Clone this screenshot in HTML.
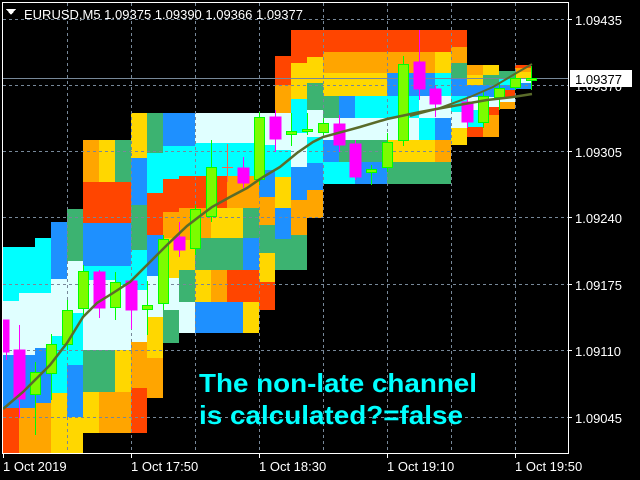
<!DOCTYPE html>
<html><head><meta charset="utf-8"><style>
html,body{margin:0;padding:0;background:#000;width:640px;height:480px;overflow:hidden}
svg{position:absolute;left:0;top:0}
text{font-family:"Liberation Sans",sans-serif}
</style></head><body>
<svg width="640" height="480" viewBox="0 0 640 480" shape-rendering="crispEdges">
<rect width="640" height="480" fill="#000"/>
<g id="blocks">
<rect x="3" y="247" width="16" height="54" fill="#00ffff"/><rect x="3" y="301" width="16" height="54" fill="#e0ffff"/><rect x="3" y="355" width="16" height="53" fill="#1e90ff"/><rect x="3" y="408" width="16" height="45" fill="#ff4500"/>
<rect x="19" y="247" width="16" height="46" fill="#00ffff"/><rect x="19" y="293" width="16" height="62" fill="#e0ffff"/><rect x="19" y="355" width="16" height="53" fill="#1e90ff"/><rect x="19" y="408" width="16" height="45" fill="#ffa500"/>
<rect x="35" y="238" width="16" height="55" fill="#00ffff"/><rect x="35" y="293" width="16" height="55" fill="#e0ffff"/><rect x="35" y="348" width="16" height="55" fill="#1e90ff"/><rect x="35" y="403" width="16" height="50" fill="#ffa500"/>
<rect x="51" y="222" width="16" height="57" fill="#1e90ff"/><rect x="51" y="279" width="16" height="57" fill="#e0ffff"/><rect x="51" y="336" width="16" height="57" fill="#00ffff"/><rect x="51" y="393" width="16" height="60" fill="#ffd700"/>
<rect x="67" y="209" width="16" height="52" fill="#3cb371"/><rect x="67" y="261" width="16" height="52" fill="#e0ffff"/><rect x="67" y="313" width="16" height="52" fill="#00ffff"/><rect x="67" y="365" width="16" height="52" fill="#1e90ff"/><rect x="67" y="417" width="16" height="36" fill="#ffd700"/>
<rect x="83" y="140" width="16" height="42" fill="#ffa500"/><rect x="83" y="182" width="16" height="41" fill="#ff4500"/><rect x="83" y="223" width="16" height="43" fill="#1e90ff"/><rect x="83" y="266" width="16" height="14" fill="#00ffff"/><rect x="83" y="280" width="16" height="70" fill="#e0ffff"/><rect x="83" y="350" width="16" height="42" fill="#3cb371"/><rect x="83" y="392" width="16" height="41" fill="#ffd700"/>
<rect x="99" y="140" width="16" height="42" fill="#ffd700"/><rect x="99" y="182" width="16" height="41" fill="#ff4500"/><rect x="99" y="223" width="16" height="43" fill="#1e90ff"/><rect x="99" y="266" width="16" height="14" fill="#00ffff"/><rect x="99" y="280" width="16" height="70" fill="#e0ffff"/><rect x="99" y="350" width="16" height="42" fill="#3cb371"/><rect x="99" y="392" width="16" height="41" fill="#ffa500"/>
<rect x="115" y="140" width="16" height="42" fill="#3cb371"/><rect x="115" y="182" width="16" height="41" fill="#ff4500"/><rect x="115" y="223" width="16" height="43" fill="#1e90ff"/><rect x="115" y="266" width="16" height="19" fill="#00ffff"/><rect x="115" y="285" width="16" height="65" fill="#e0ffff"/><rect x="115" y="350" width="16" height="42" fill="#ffd700"/><rect x="115" y="392" width="16" height="41" fill="#ffa500"/>
<rect x="131" y="113" width="16" height="45" fill="#ffd700"/><rect x="131" y="158" width="16" height="47" fill="#1e90ff"/><rect x="131" y="205" width="16" height="45" fill="#3cb371"/><rect x="131" y="250" width="16" height="40" fill="#00ffff"/><rect x="131" y="290" width="16" height="52" fill="#e0ffff"/><rect x="131" y="342" width="16" height="46" fill="#ffa500"/><rect x="131" y="388" width="16" height="45" fill="#ff4500"/>
<rect x="147" y="113" width="16" height="40" fill="#3cb371"/><rect x="147" y="153" width="16" height="40" fill="#00ffff"/><rect x="147" y="193" width="16" height="42" fill="#ff4500"/><rect x="147" y="235" width="16" height="41" fill="#1e90ff"/><rect x="147" y="276" width="16" height="41" fill="#e0ffff"/><rect x="147" y="317" width="16" height="41" fill="#ffd700"/><rect x="147" y="358" width="16" height="40" fill="#ffa500"/>
<rect x="163" y="113" width="16" height="33" fill="#1e90ff"/><rect x="163" y="146" width="16" height="33" fill="#00ffff"/><rect x="163" y="179" width="16" height="33" fill="#ff4500"/><rect x="163" y="212" width="16" height="26" fill="#ffa500"/><rect x="163" y="238" width="16" height="40" fill="#ffd700"/><rect x="163" y="278" width="16" height="32" fill="#e0ffff"/><rect x="163" y="310" width="16" height="33" fill="#3cb371"/>
<rect x="179" y="113" width="16" height="33" fill="#1e90ff"/><rect x="179" y="146" width="16" height="30" fill="#00ffff"/><rect x="179" y="176" width="16" height="32" fill="#ff4500"/><rect x="179" y="208" width="16" height="32" fill="#ffa500"/><rect x="179" y="240" width="16" height="30" fill="#ffd700"/><rect x="179" y="270" width="16" height="32" fill="#3cb371"/><rect x="179" y="302" width="16" height="31" fill="#e0ffff"/>
<rect x="195" y="113" width="16" height="30" fill="#e0ffff"/><rect x="195" y="143" width="16" height="33" fill="#00ffff"/><rect x="195" y="176" width="16" height="32" fill="#ff4500"/><rect x="195" y="208" width="16" height="30" fill="#ffa500"/><rect x="195" y="238" width="16" height="32" fill="#3cb371"/><rect x="195" y="270" width="16" height="32" fill="#ffd700"/><rect x="195" y="302" width="16" height="31" fill="#1e90ff"/>
<rect x="211" y="113" width="16" height="30" fill="#e0ffff"/><rect x="211" y="143" width="16" height="33" fill="#00ffff"/><rect x="211" y="176" width="16" height="32" fill="#ff4500"/><rect x="211" y="208" width="16" height="30" fill="#ffd700"/><rect x="211" y="238" width="16" height="32" fill="#3cb371"/><rect x="211" y="270" width="16" height="32" fill="#ffa500"/><rect x="211" y="302" width="16" height="31" fill="#1e90ff"/>
<rect x="227" y="113" width="16" height="30" fill="#e0ffff"/><rect x="227" y="143" width="16" height="33" fill="#00ffff"/><rect x="227" y="176" width="16" height="32" fill="#ffa500"/><rect x="227" y="208" width="16" height="30" fill="#ffd700"/><rect x="227" y="238" width="16" height="32" fill="#3cb371"/><rect x="227" y="270" width="16" height="32" fill="#ff4500"/><rect x="227" y="302" width="16" height="31" fill="#1e90ff"/>
<rect x="243" y="113" width="16" height="30" fill="#e0ffff"/><rect x="243" y="143" width="16" height="33" fill="#00ffff"/><rect x="243" y="176" width="16" height="32" fill="#ffa500"/><rect x="243" y="208" width="16" height="30" fill="#3cb371"/><rect x="243" y="238" width="16" height="32" fill="#1e90ff"/><rect x="243" y="270" width="16" height="32" fill="#ff4500"/><rect x="243" y="302" width="16" height="31" fill="#ffd700"/>
<rect x="259" y="113" width="16" height="32" fill="#e0ffff"/><rect x="259" y="145" width="16" height="25" fill="#00ffff"/><rect x="259" y="170" width="16" height="27" fill="#1e90ff"/><rect x="259" y="197" width="16" height="28" fill="#ffa500"/><rect x="259" y="225" width="16" height="28" fill="#3cb371"/><rect x="259" y="253" width="16" height="29" fill="#ffd700"/><rect x="259" y="282" width="16" height="28" fill="#ff4500"/>
<rect x="275" y="56" width="16" height="29" fill="#ff4500"/><rect x="275" y="85" width="16" height="28" fill="#ffa500"/><rect x="275" y="113" width="16" height="37" fill="#e0ffff"/><rect x="275" y="150" width="16" height="27" fill="#00ffff"/><rect x="275" y="177" width="16" height="31" fill="#ffd700"/><rect x="275" y="208" width="16" height="31" fill="#1e90ff"/><rect x="275" y="239" width="16" height="31" fill="#3cb371"/>
<rect x="291" y="30" width="16" height="33" fill="#ff4500"/><rect x="291" y="63" width="16" height="36" fill="#ffd700"/><rect x="291" y="99" width="16" height="34" fill="#00ffff"/><rect x="291" y="133" width="16" height="34" fill="#e0ffff"/><rect x="291" y="167" width="16" height="33" fill="#1e90ff"/><rect x="291" y="200" width="16" height="35" fill="#ffa500"/><rect x="291" y="235" width="16" height="35" fill="#3cb371"/>
<rect x="307" y="30" width="16" height="27" fill="#ff4500"/><rect x="307" y="57" width="16" height="26" fill="#ffd700"/><rect x="307" y="83" width="16" height="27" fill="#3cb371"/><rect x="307" y="110" width="16" height="27" fill="#e0ffff"/><rect x="307" y="137" width="16" height="26" fill="#00ffff"/><rect x="307" y="163" width="16" height="27" fill="#1e90ff"/><rect x="307" y="190" width="16" height="28" fill="#ffa500"/>
<rect x="323" y="30" width="128" height="22" fill="#ff4500"/>
<rect x="323" y="52" width="112" height="21" fill="#ffa500"/><rect x="435" y="52" width="16" height="21" fill="#ffd700"/>
<rect x="323" y="73" width="64" height="23" fill="#ffd700"/><rect x="387" y="73" width="48" height="23" fill="#1e90ff"/><rect x="435" y="73" width="16" height="23" fill="#00ffff"/>
<rect x="323" y="96" width="16" height="22" fill="#3cb371"/><rect x="339" y="96" width="16" height="22" fill="#1e90ff"/><rect x="355" y="96" width="64" height="22" fill="#00ffff"/><rect x="419" y="96" width="32" height="22" fill="#e0ffff"/>
<rect x="323" y="118" width="96" height="22" fill="#e0ffff"/><rect x="419" y="118" width="16" height="22" fill="#00ffff"/><rect x="435" y="118" width="16" height="22" fill="#1e90ff"/>
<rect x="323" y="140" width="16" height="22" fill="#1e90ff"/><rect x="339" y="140" width="48" height="22" fill="#3cb371"/><rect x="387" y="140" width="48" height="22" fill="#ffd700"/><rect x="435" y="140" width="16" height="22" fill="#ffa500"/>
<rect x="323" y="162" width="32" height="22" fill="#00ffff"/><rect x="355" y="162" width="32" height="22" fill="#1e90ff"/><rect x="387" y="162" width="64" height="22" fill="#3cb371"/>
<rect x="451" y="30" width="16" height="17" fill="#ff4500"/><rect x="451" y="47" width="16" height="16" fill="#ffa500"/><rect x="451" y="63" width="16" height="15" fill="#3cb371"/><rect x="451" y="78" width="16" height="18" fill="#1e90ff"/><rect x="451" y="96" width="16" height="16" fill="#00ffff"/><rect x="451" y="112" width="16" height="16" fill="#e0ffff"/><rect x="451" y="128" width="16" height="17" fill="#ffd700"/>
<rect x="467" y="65" width="16" height="10" fill="#ffa500"/><rect x="467" y="75" width="16" height="10" fill="#ffd700"/><rect x="467" y="85" width="16" height="12" fill="#1e90ff"/><rect x="467" y="97" width="16" height="13" fill="#e0ffff"/><rect x="467" y="110" width="16" height="17" fill="#00ffff"/><rect x="467" y="127" width="16" height="10" fill="#ff4500"/>
<rect x="483" y="65" width="16" height="10" fill="#ffd700"/><rect x="483" y="75" width="16" height="10" fill="#3cb371"/><rect x="483" y="85" width="16" height="12" fill="#1e90ff"/><rect x="483" y="97" width="16" height="10" fill="#e0ffff"/><rect x="483" y="107" width="16" height="8" fill="#ff4500"/><rect x="483" y="115" width="16" height="22" fill="#ffa500"/>
<rect x="499" y="71" width="16" height="7" fill="#3cb371"/><rect x="499" y="78" width="16" height="7" fill="#00ffff"/><rect x="499" y="85" width="16" height="5" fill="#1e90ff"/><rect x="499" y="90" width="16" height="7" fill="#ff4500"/><rect x="499" y="97" width="16" height="5" fill="#e0ffff"/><rect x="499" y="102" width="16" height="7" fill="#ffa500"/>
<rect x="515" y="65" width="16" height="3" fill="#ff4500"/><rect x="515" y="68" width="16" height="4" fill="#ffa500"/><rect x="515" y="72" width="16" height="6" fill="#ffd700"/><rect x="515" y="78" width="16" height="5" fill="#e0ffff"/><rect x="515" y="83" width="16" height="6" fill="#1e90ff"/>
</g>
<g stroke="#778899" stroke-width="1" stroke-dasharray="3,3" fill="none">
<line x1="3" y1="19.5" x2="568" y2="19.5"/><line x1="3" y1="85.5" x2="568" y2="85.5"/><line x1="3" y1="151.5" x2="568" y2="151.5"/><line x1="3" y1="217.5" x2="568" y2="217.5"/><line x1="3" y1="284.5" x2="568" y2="284.5"/><line x1="3" y1="350.5" x2="568" y2="350.5"/><line x1="3" y1="417.5" x2="568" y2="417.5"/>
<line x1="67.5" y1="3" x2="67.5" y2="453"/><line x1="131.5" y1="3" x2="131.5" y2="453"/><line x1="195.5" y1="3" x2="195.5" y2="453"/><line x1="259.5" y1="3" x2="259.5" y2="453"/><line x1="323.5" y1="3" x2="323.5" y2="453"/><line x1="387.5" y1="3" x2="387.5" y2="453"/><line x1="451.5" y1="3" x2="451.5" y2="453"/><line x1="515.5" y1="3" x2="515.5" y2="453"/>
</g>
<line x1="3" y1="78.5" x2="568" y2="78.5" stroke="#778899"/>
<g stroke-width="1">
<g stroke="#ff00ff" fill="#ff00ff">
<line x1="6.5" y1="320" x2="6.5" y2="360"/><rect x="3" y="320" width="6" height="32"/>
<line x1="19.5" y1="325" x2="19.5" y2="418"/><rect x="14" y="350" width="11" height="49"/>
<line x1="99.5" y1="270" x2="99.5" y2="318"/><rect x="94" y="272" width="11" height="36"/>
<line x1="131.5" y1="281" x2="131.5" y2="329"/><rect x="126" y="281" width="11" height="29"/>
<line x1="179.5" y1="222" x2="179.5" y2="257"/><rect x="174" y="237" width="11" height="13"/>
<line x1="243.5" y1="157" x2="243.5" y2="188"/><rect x="238" y="168" width="11" height="15"/>
<line x1="275.5" y1="110" x2="275.5" y2="152"/><rect x="270" y="117" width="11" height="22"/>
<line x1="339.5" y1="115" x2="339.5" y2="152"/><rect x="334" y="124" width="11" height="21"/>
<line x1="355.5" y1="140" x2="355.5" y2="180"/><rect x="350" y="144" width="11" height="33"/>
<line x1="419.5" y1="30" x2="419.5" y2="100"/><rect x="414" y="62" width="11" height="27"/>
<line x1="435.5" y1="86" x2="435.5" y2="117"/><rect x="430" y="89" width="11" height="15"/>
<line x1="467.5" y1="98" x2="467.5" y2="128"/><rect x="462" y="102" width="11" height="20"/>
</g>
<line x1="227.5" y1="144" x2="227.5" y2="182" stroke="#ff6347"/><line x1="222" y1="167.5" x2="233" y2="167.5" stroke="#ff6347"/>
<g stroke="#00ff00" fill="#7cfc00">
<line x1="35.5" y1="362" x2="35.5" y2="435"/><rect x="30.5" y="372.5" width="10" height="22"/>
<line x1="51.5" y1="334" x2="51.5" y2="400"/><rect x="46.5" y="344.5" width="10" height="29"/>
<line x1="67.5" y1="300" x2="67.5" y2="350"/><rect x="62.5" y="310.5" width="10" height="34"/>
<line x1="83.5" y1="265" x2="83.5" y2="315"/><rect x="78.5" y="271.5" width="10" height="37"/>
<line x1="115.5" y1="272" x2="115.5" y2="320"/><rect x="110.5" y="282.5" width="10" height="25"/>
<line x1="147.5" y1="281" x2="147.5" y2="335"/><rect x="142.5" y="305.5" width="10" height="4"/>
<line x1="163.5" y1="235" x2="163.5" y2="310"/><rect x="158.5" y="239.5" width="10" height="64"/>
<line x1="195.5" y1="205" x2="195.5" y2="255"/><rect x="190.5" y="209.5" width="10" height="39"/>
<line x1="211.5" y1="140" x2="211.5" y2="222"/><rect x="206.5" y="167.5" width="10" height="49"/>
<line x1="259.5" y1="112" x2="259.5" y2="185"/><rect x="254.5" y="117.5" width="10" height="62"/>
<line x1="291.5" y1="113" x2="291.5" y2="146"/><rect x="286.5" y="131.5" width="10" height="3"/>
<line x1="307.5" y1="113" x2="307.5" y2="135"/><rect x="302.5" y="129.5" width="10" height="2"/>
<line x1="323.5" y1="118" x2="323.5" y2="135"/><rect x="318.5" y="123.5" width="10" height="9"/>
<line x1="371.5" y1="165" x2="371.5" y2="185"/><rect x="366.5" y="169.5" width="10" height="3"/>
<line x1="387.5" y1="133" x2="387.5" y2="172"/><rect x="382.5" y="142.5" width="10" height="25"/>
<line x1="403.5" y1="56" x2="403.5" y2="146"/><rect x="398.5" y="64.5" width="10" height="76"/>
<line x1="483.5" y1="92" x2="483.5" y2="128"/><rect x="478.5" y="96.5" width="10" height="26"/>
<line x1="499.5" y1="82" x2="499.5" y2="110"/><rect x="494.5" y="88.5" width="10" height="9"/>
<line x1="515.5" y1="72" x2="515.5" y2="90"/><rect x="510.5" y="78.5" width="10" height="9"/>
<line x1="531.5" y1="66" x2="531.5" y2="90"/><rect x="526.5" y="78.5" width="10" height="2"/>
</g>
</g>
<g fill="none" stroke="#5a6b2a" stroke-width="2.5" shape-rendering="auto">
<polyline points="3,409 23,392 37,378 50,365 67,343 83,317 97,303 113,293 130,282 150,262 167,245 187,226 200,216 212,207 230,197 247,188 263,177 280,167 297,153 313,142 323,137 360,127 387,119 420,112 453,106 487,100 513,97 532,94"/>
<polyline points="410,116 440,108 470,97 493,87 513,75 532,64" stroke-width="2"/>
</g>
<g stroke="#fff" fill="none">
<line x1="2.5" y1="2" x2="2.5" y2="454"/><line x1="2" y1="2.5" x2="569" y2="2.5"/><line x1="568.5" y1="2" x2="568.5" y2="454"/><line x1="2" y1="453.5" x2="569" y2="453.5"/>
<line x1="3.5" y1="453" x2="3.5" y2="458"/><line x1="131.5" y1="453" x2="131.5" y2="458"/><line x1="259.5" y1="453" x2="259.5" y2="458"/><line x1="387.5" y1="453" x2="387.5" y2="458"/><line x1="515.5" y1="453" x2="515.5" y2="458"/>
<line x1="568" y1="19.5" x2="572" y2="19.5"/><line x1="568" y1="151.5" x2="572" y2="151.5"/><line x1="568" y1="217.5" x2="572" y2="217.5"/><line x1="568" y1="284.5" x2="572" y2="284.5"/><line x1="568" y1="350.5" x2="572" y2="350.5"/><line x1="568" y1="417.5" x2="572" y2="417.5"/>
</g>
<polygon points="6,9 16,9 11,15" fill="#fff"/>
<text x="24" y="19" fill="#fff" font-size="13">EURUSD,M5  1.09375 1.09390 1.09366 1.09377</text>
<g fill="#fff" font-size="13">
<text x="575" y="25">1.09435</text>
<text x="575" y="91">1.09370</text>
<text x="575" y="157">1.09305</text>
<text x="575" y="223">1.09240</text>
<text x="575" y="290">1.09175</text>
<text x="575" y="356">1.09110</text>
<text x="575" y="423">1.09045</text>
</g>
<rect x="570" y="70" width="62" height="17" fill="#fff"/>
<text x="575" y="84" fill="#000" font-size="13">1.09377</text>
<g fill="#fff" font-size="13">
<text x="3" y="471">1 Oct 2019</text>
<text x="131" y="471">1 Oct 17:50</text>
<text x="259" y="471">1 Oct 18:30</text>
<text x="387" y="471">1 Oct 19:10</text>
<text x="515" y="471">1 Oct 19:50</text>
</g>
<g fill="#00ffff" font-size="26" font-weight="bold">
<text x="199" y="392" textLength="278" lengthAdjust="spacingAndGlyphs">The non-late channel</text>
<text x="199" y="424" textLength="264" lengthAdjust="spacingAndGlyphs">is calculated?=false</text>
</g>
</svg>
</body></html>
